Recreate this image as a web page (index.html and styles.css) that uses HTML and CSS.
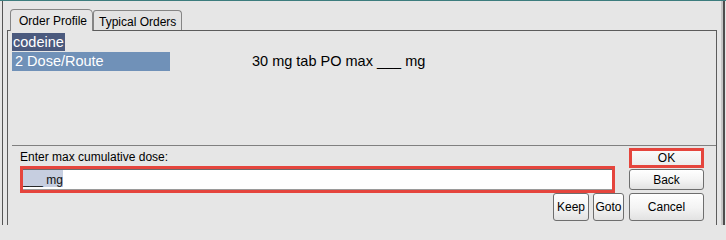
FILE: index.html
```html
<!DOCTYPE html>
<html>
<head>
<meta charset="utf-8">
<link rel="stylesheet" href="styles.css">
</head>
<body>
<div class="screen">
  <div class="edge-l"></div>
  <div class="frame">
    <div class="tabs">
      <div class="tab tab-active">Order Profile</div>
      <div class="tab tab-second">Typical Orders</div>
    </div>
    <div class="panel">
      <div class="list">
        <div class="row"><span class="sel-dark">codeine</span></div>
        <div class="row row2"><span class="sel-light">2 Dose/Route</span><span class="desc">30 mg tab PO max ___ mg</span></div>
      </div>
      <div class="sep"></div>
      <div class="form">
        <div class="form-left">
          <div class="label">Enter max cumulative dose:</div>
          <div class="input"><div class="input-inner"><span class="input-sel">___ mg</span></div></div>
          <div class="small-btns">
            <button class="btn keep">Keep</button>
            <button class="btn goto">Goto</button>
          </div>
        </div>
        <div class="form-right">
          <button class="btn ok">OK</button>
          <button class="btn back">Back</button>
          <button class="btn cancel">Cancel</button>
        </div>
      </div>
    </div>
  </div>
  <div class="gap"></div>
  <div class="rbar"></div>
  <div class="edge-r"></div>
</div>
</body>
</html>
```

FILE: styles.css
```css
html, body {
  margin: 0;
  padding: 0;
  background: #e6e6e6;
}
* { box-sizing: border-box; }

.screen {
  width: 726px;
  height: 225px;
  overflow: hidden;
  display: flex;
  border-top: 1px solid #3d7d7e;
  background: #e6e6e6;
  font-family: "Liberation Sans", Arial, sans-serif;
  color: #000;
}

.edge-l { width: 2px; flex: none; }
.edge-r { width: 1px; flex: none; }
.gap { width: 4px; flex: none; }
.rbar {
  width: 4px;
  flex: none;
  border-left: 2px solid #c6c6c6;
  border-right: 2px solid #4e4e4e;
}

.frame {
  width: 715px;
  flex: none;
  border-left: 1px solid #555;
  padding-left: 4px;
  display: flex;
  flex-direction: column;
}

.tabs {
  height: 29px;
  flex: none;
  display: flex;
  align-items: flex-end;
  padding-left: 3px;
}

.tab {
  font-size: 12px;
  line-height: 14px;
  border: 1px solid #858585;
  border-bottom: none;
  padding-top: 4px;
  white-space: nowrap;
  background: #e6e6e6;
}

.tab-active {
  width: 83px;
  height: 22px;
  padding-left: 8px;
  margin-bottom: -1px;
  position: relative;
  z-index: 1;
  border-radius: 4px 5px 0 0;
}

.tab-second {
  width: 89px;
  height: 20px;
  padding-left: 5px;
  border-radius: 3px 4px 0 0;
  background: #e3e3e3;
}

.panel {
  flex: 1;
  border: 1px solid #5c5c5c;
  border-bottom: none;
}

.list {
  height: 114px;
  padding: 2px 0 0 4px;
  font-size: 14.5px;
}

.row {
  display: flex;
  height: 18px;
  line-height: 18px;
}

.row2 {
  margin-top: 1px;
  height: 19px;
  line-height: 19px;
}

.sel-dark {
  background: #4b5a7e;
  color: #fff;
  padding: 0 1px;
}

.sel-light {
  width: 158px;
  padding-left: 3px;
  background: #7091b8;
  color: #fff;
}

.desc {
  margin-left: 82px;
  color: #000;
}

.sep {
  margin-left: 4px;
  border-top: 1px solid #808080;
}

.form {
  display: flex;
  gap: 5px;
  padding: 0 12px;
}

.form-left {
  flex: 1;
  padding-top: 4px;
  display: flex;
  flex-direction: column;
}

.label {
  font-size: 12px;
  line-height: 14px;
  height: 14px;
}

.input {
  margin-top: 2px;
  width: 595px;
  height: 27px;
  border: 3px solid #e5453d;
}

.input-inner {
  height: 21px;
  background: #fff;
  border-top: 1px solid #6a6a6a;
  border-bottom: 1px solid #9a9a9a;
}

.input-sel {
  display: inline-block;
  height: 17px;
  padding-top: 3px;
  font-size: 12px;
  line-height: 14px;
  background: #c6cee0;
  color: #111;
  vertical-align: top;
}

.small-btns {
  display: flex;
  justify-content: flex-end;
  gap: 4px;
  height: 28px;
}

.form-right {
  width: 75px;
  flex: none;
  padding-top: 2px;
  display: flex;
  flex-direction: column;
}

.btn {
  appearance: none;
  -webkit-appearance: none;
  margin: 0;
  padding: 0;
  font-family: "Liberation Sans", Arial, sans-serif;
  font-size: 12px;
  color: #000;
  border: 1px solid #6e6e6e;
  border-radius: 3px;
  background: linear-gradient(#ffffff, #f3f3f3 55%, #e2e2e2);
  display: flex;
  align-items: center;
  justify-content: center;
}

.keep { width: 36px; height: 28px; }
.goto { width: 31px; height: 28px; }

.ok {
  height: 20px;
  border: 3px solid #e5453d;
  border-radius: 0;
  background: linear-gradient(#fafafa, #ececec);
}

.back {
  margin-top: 1px;
  height: 21px;
}

.cancel {
  margin-top: 3px;
  height: 28px;
}
```
